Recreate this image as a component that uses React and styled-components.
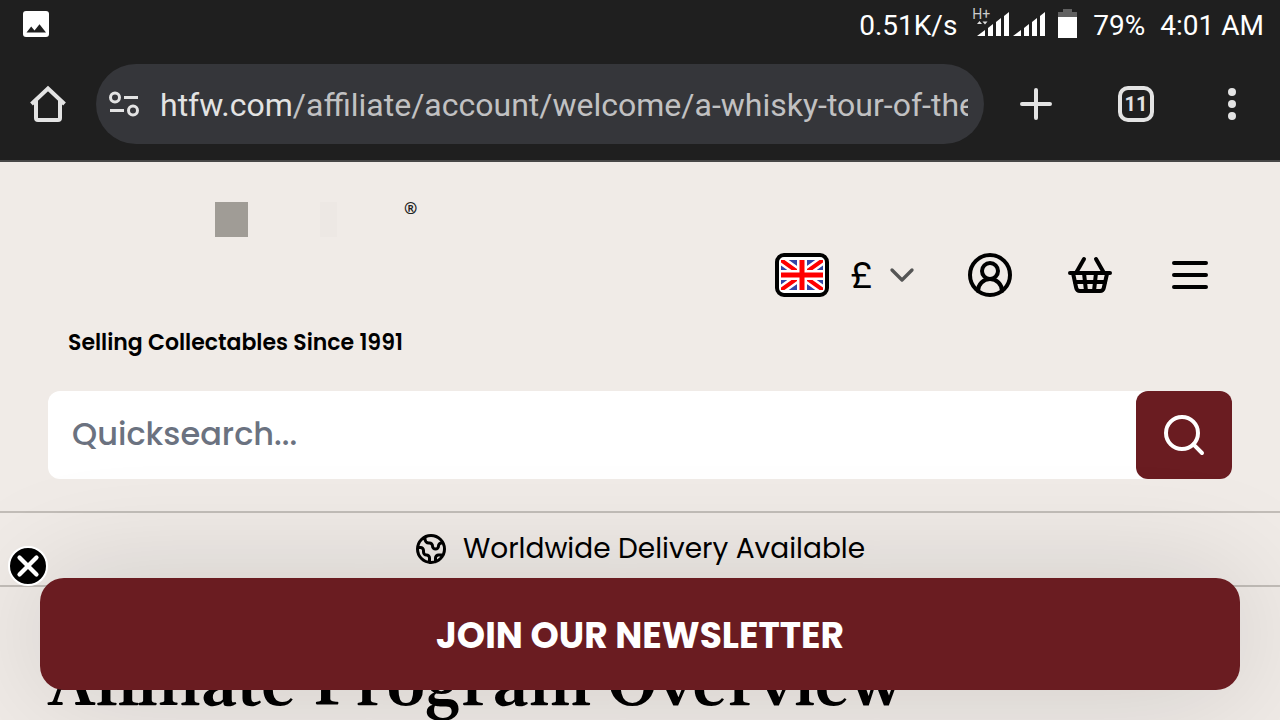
import React, { useState } from "react"
import styled, { createGlobalStyle } from "styled-components"
import { ChevronDown, CircleUserRound, ShoppingBasket, X } from "lucide-react"

const GlobalStyle = createGlobalStyle`
  *, *::before, *::after {
    box-sizing: border-box;
  }
  body {
    margin: 0;
    background: #f0ebe7;
    color: #000;
    font-family: Poppins, Inter, sans-serif;
  }
  button, input, select {
    font-family: inherit;
  }
`

const Screen = styled.div`
  display: flex;
  flex-direction: column;
  height: 100vh;
`

const Chrome = styled.header`
  flex: none;
  background: #1f1f1f;
  border-bottom: 2px solid #474747;
  font-family: Roboto, sans-serif;
`

const StatusBar = styled.div`
  display: flex;
  align-items: center;
  justify-content: space-between;
  height: 48px;
  padding: 0 16px 0 20px;
  color: #fff;
  font-size: 28px;
  line-height: 48px;
`

const StatusGroup = styled.div`
  display: flex;
  align-items: center;
  gap: 15px;
  padding-top: 4px;
`

const StatusIcons = styled.span`
  display: flex;
  align-items: center;
  gap: 12px;
  padding-bottom: 4px;
`

const Signal = styled.span`
  position: relative;
  display: flex;
`

const NetworkType = styled.span`
  position: absolute;
  top: -1px;
  left: 0;
  color: #ccc;
  font-size: 14px;
  line-height: 14px;
`

const Toolbar = styled.div`
  display: flex;
  align-items: center;
  padding: 16px 0;
`

const ToolButton = styled.button`
  display: flex;
  align-items: center;
  justify-content: center;
  flex: none;
  width: ${p => p.$wide ? "104px" : "96px"};
  height: 80px;
  padding: 0;
  border: 0;
  background: none;
  color: #e3e3e3;
  cursor: pointer;
`

const AddressBar = styled.div`
  display: flex;
  align-items: center;
  gap: 20px;
  flex: 1;
  min-width: 0;
  height: 80px;
  padding: 0 16px 0 12px;
  border-radius: 40px;
  background: #35363a;
`

const Url = styled.div`
  flex: 1;
  overflow: hidden;
  padding-top: 2px;
  color: #c1c1c2;
  font-size: 32px;
  line-height: 48px;
  white-space: nowrap;
`

const Host = styled.span`
  color: #e3e3e3;
`

const TabCount = styled.span`
  display: flex;
  align-items: center;
  justify-content: center;
  width: 36px;
  height: 36px;
  border: 4px solid #e3e3e3;
  border-radius: 10px;
  font-family: Roboto, sans-serif;
  font-size: 20px;
  font-weight: 700;
`

const Page = styled.main`
  flex: 1;
  min-height: 0;
  overflow-y: auto;
  scrollbar-width: none;
`

const ShopHeader = styled.div`
  padding: 32px 48px;
`

const HeaderRow = styled.div`
  display: flex;
  align-items: center;
  justify-content: space-between;
  margin-bottom: 35px;
`

const Brand = styled.a`
  display: flex;
  flex-direction: column;
  gap: 93px;
  padding: 8px 0 0 20px;
  color: #000;
  text-decoration: none;
`

const BrandTop = styled.span`
  display: flex;
  align-items: flex-start;
`

const Registered = styled.span`
  color: #222;
  font-family: "Open Sans", sans-serif;
  font-size: 16px;
  font-weight: 700;
  line-height: 12px;
`

const Tagline = styled.span`
  font-size: 22px;
  font-weight: 600;
  line-height: 26px;
`

const Actions = styled.nav`
  display: flex;
  align-items: center;
`

const IconButton = styled.button`
  display: flex;
  align-items: center;
  justify-content: center;
  width: 48px;
  height: 48px;
  margin-right: ${p => p.$last ? "18px" : "52px"};
  padding: 0;
  border: 0;
  background: none;
  color: #000;
  cursor: pointer;
`

const FlagButton = styled.button`
  display: flex;
  width: 54px;
  height: 44px;
  margin-right: 21px;
  padding: 2px;
  border: 4px solid #000;
  border-radius: 9px;
  background: #fff;
  cursor: pointer;
`

const Currency = styled.label`
  display: flex;
  align-items: center;
  margin-right: 44px;
  color: #555;
`

const CurrencySelect = styled.select`
  width: 64px;
  margin-right: -32px;
  padding: 0;
  border: 0;
  background: none;
  appearance: none;
  color: #000;
  font-size: 38px;
  font-weight: 400;
  line-height: 48px;
`

const SearchForm = styled.form`
  display: flex;
  height: 88px;
  border-radius: 12px;
  background: #fff;
`

const SearchInput = styled.input`
  flex: 1;
  min-width: 0;
  padding: 0 24px 2px;
  border: 0;
  background: none;
  color: #000;
  font-size: 32px;
  font-weight: 500;
  &::placeholder {
    color: #6b7280;
    opacity: 1;
  }
  &:focus {
    outline: none;
  }
`

const SearchButton = styled.button`
  display: flex;
  align-items: center;
  justify-content: center;
  width: 96px;
  padding: 0;
  border: 0;
  border-radius: 12px;
  background: #6a1c21;
  color: #fff;
  cursor: pointer;
`

const Delivery = styled.div`
  display: flex;
  align-items: center;
  justify-content: center;
  gap: 14px;
  height: 76px;
  padding-right: 2px;
  border-top: 2px solid #c2bdb8;
  border-bottom: 2px solid #c2bdb8;
  font-size: 28px;
`

const Title = styled.h1`
  margin: 0;
  padding: 56px 48px 0;
  font-family: Gelasio, "Liberation Serif", serif;
  font-size: 64px;
  font-weight: 600;
  line-height: 88px;
  white-space: nowrap;
`

const Newsletter = styled.aside`
  position: fixed;
  right: 40px;
  bottom: 30px;
  left: 40px;
  border-radius: 24px;
  box-shadow: 0 0 120px rgba(0, 0, 0, 0.15);
`

const JoinButton = styled.button`
  width: 100%;
  height: 112px;
  padding: 2px 24px 0;
  border: 0;
  border-radius: 24px;
  background: #6a1c21;
  color: #fff;
  font-size: 36px;
  font-weight: 700;
  cursor: pointer;
`

const CloseButton = styled.button`
  position: absolute;
  top: -32px;
  left: -32px;
  display: flex;
  align-items: center;
  justify-content: center;
  width: 40px;
  height: 40px;
  padding: 0;
  border: 2px solid #fff;
  border-radius: 50%;
  background: #000;
  color: #fff;
  cursor: pointer;
`

const PictureIcon = () => (
  <svg width="32" height="32" viewBox="0 0 32 32">
    <rect x="3" y="3" width="26" height="26" rx="3" fill="#fff" />
    <path d="M6.500 24.500 11.200 18.500 14.500 22.500 19.500 16.200 26 24.500z" fill="#1f1f1f" />
  </svg>
)

const SignalIcon = () => (
  <svg width="74" height="32" viewBox="0 0 74 32" fill="#fff">
    {[5, 41].map(x => (
      <path
        key={x}
        transform={`translate(${x} 0)`}
        d="M0 28 8 22V28zM11 20 16 16V28H11zM19 14 24 10V28H19zM27 8 32 4V28H27z"
      />
    ))}
    <path d="M5 16h5L7.500 13zM10.500 13.500h5L13 16.500z" fill="#ddd" />
  </svg>
)

const BatteryIcon = () => (
  <svg width="20" height="32" viewBox="0 0 20 32">
    <path d="M5 1h9v3h5v6H0V4h5z" fill="#616161" />
    <path d="M0 9h19v21H0z" fill="#fff" />
  </svg>
)

const HomeIcon = () => (
  <svg width="40" height="40" viewBox="0 0 40 40" fill="none" stroke="currentColor" strokeWidth="4">
    <path d="M3.500 20 20 4.500 36.500 20" />
    <path d="M8 16V34a2 2 0 0 0 2 2H30a2 2 0 0 0 2-2V16" />
  </svg>
)

const SiteIcon = () => (
  <svg width="32" height="32" viewBox="0 0 32 32" fill="none" stroke="#e3e3e3" strokeWidth="3">
    <circle cx="7" cy="9.500" r="4.500" />
    <path d="M16 9.500H30M2 22.500H16" />
    <circle cx="25" cy="22.500" r="4.500" />
  </svg>
)

const PlusIcon = () => (
  <svg width="32" height="32" viewBox="0 0 32 32" stroke="currentColor" strokeWidth="4" strokeLinecap="round">
    <path d="M16 2V30M2 16H30" />
  </svg>
)

const DotsIcon = () => (
  <svg width="8" height="32" viewBox="0 0 8 32" fill="currentColor">
    <circle cx="4" cy="4" r="4" />
    <circle cx="4" cy="16" r="4" />
    <circle cx="4" cy="28" r="4" />
  </svg>
)

const LogoBlocks = () => (
  <svg width="336" height="35" viewBox="0 0 336 35">
    <rect x="147" width="33" height="35" fill="#a09c96" />
    <rect x="252" width="17" height="35" fill="#ede8e4" />
  </svg>
)

const UnionJack = () => (
  <svg width="42" height="32" viewBox="0 0 42 32">
    <rect width="42" height="32" fill="#fff" />
    <rect y="1" width="42" height="30" fill="#3346a6" />
    <path d="M0 1 42 31M42 1 0 31" stroke="#fff" strokeWidth="9" />
    <path d="M0 1 42 31M42 1 0 31" stroke="#f00" strokeWidth="4" />
    <path d="M21 1V31M0 16H42" stroke="#fff" strokeWidth="10" />
    <path d="M21 1V31M0 16H42" stroke="#f00" strokeWidth="5" />
    <path d="M0 0H42V1H0zM0 31H42V32H0z" fill="#fff" />
  </svg>
)

const MenuIcon = () => (
  <svg width="48" height="48" viewBox="0 0 24 24" stroke="currentColor" strokeWidth="2" strokeLinecap="round">
    <path d="M4 6H20M4 12H20M4 18H20" />
  </svg>
)

const SearchIcon = () => (
  <svg width="48" height="48" viewBox="0 0 24 24" fill="none" stroke="currentColor" strokeWidth="2" strokeLinecap="round">
    <circle cx="11" cy="11" r="8" />
    <path d="m21 21-4.300-4.300" />
  </svg>
)

const GlobeIcon = () => (
  <svg width="36" height="36" viewBox="0 0 24 24" fill="none" stroke="currentColor" strokeWidth="2" strokeLinecap="round" strokeLinejoin="round">
    <path d="M3.055 11H5a2 2 0 0 1 2 2v1a2 2 0 0 0 2 2 2 2 0 0 1 2 2v2.945M8 3.935V5.500A2.500 2.500 0 0 0 10.500 8h.5a2 2 0 0 1 2 2 2 2 0 1 0 4 0 2 2 0 0 1 2-2h1.064M15 20.488V18a2 2 0 0 1 2-2h3.064M21 12a9 9 0 1 1-18 0 9 9 0 0 1 18 0z" />
  </svg>
)

const BrowserBar = () => (
  <Chrome>
    <StatusBar>
      <PictureIcon />
      <StatusGroup>
        <span>0.51K/s</span>
        <StatusIcons>
          <Signal>
            <SignalIcon />
            <NetworkType>H+</NetworkType>
          </Signal>
          <BatteryIcon />
        </StatusIcons>
        <span>79%</span>
        <span>4:01 AM</span>
      </StatusGroup>
    </StatusBar>
    <Toolbar>
      <ToolButton aria-label="Home"><HomeIcon /></ToolButton>
      <AddressBar>
        <SiteIcon />
        <Url><Host>htfw.com</Host>/affiliate/account/welcome/a-whisky-tour-of-the</Url>
      </AddressBar>
      <ToolButton $wide aria-label="New tab"><PlusIcon /></ToolButton>
      <ToolButton aria-label="Tabs"><TabCount>11</TabCount></ToolButton>
      <ToolButton aria-label="More"><DotsIcon /></ToolButton>
    </Toolbar>
  </Chrome>
)

const App = () => {
  const [query, setQuery] = useState("")
  const [showNewsletter, setShowNewsletter] = useState(true)

  return (
    <Screen>
      <GlobalStyle />
      <BrowserBar />
      <Page>
        <ShopHeader>
          <HeaderRow>
            <Brand href="/">
              <BrandTop>
                <LogoBlocks />
                <Registered>®</Registered>
              </BrandTop>
              <Tagline>Selling Collectables Since 1991</Tagline>
            </Brand>
            <Actions>
              <FlagButton aria-label="Country"><UnionJack /></FlagButton>
              <Currency>
                <CurrencySelect aria-label="Currency" defaultValue="GBP">
                  <option value="GBP">£</option>
                </CurrencySelect>
                <ChevronDown size={40} pointerEvents="none" />
              </Currency>
              <IconButton aria-label="Account"><CircleUserRound size={48} /></IconButton>
              <IconButton aria-label="Basket"><ShoppingBasket size={48} /></IconButton>
              <IconButton $last aria-label="Menu"><MenuIcon /></IconButton>
            </Actions>
          </HeaderRow>
          <SearchForm onSubmit={e => e.preventDefault()}>
            <SearchInput
              aria-label="Quicksearch"
              placeholder="Quicksearch..."
              value={query}
              onChange={e => setQuery(e.target.value)}
            />
            <SearchButton aria-label="Search"><SearchIcon /></SearchButton>
          </SearchForm>
        </ShopHeader>
        <Delivery>
          <GlobeIcon />
          <span>Worldwide Delivery Available</span>
        </Delivery>
        <Title>Affiliate Program Overview</Title>
      </Page>
      {showNewsletter && (
        <Newsletter>
          <JoinButton>JOIN OUR NEWSLETTER</JoinButton>
          <CloseButton aria-label="Close" onClick={() => setShowNewsletter(false)}>
            <X size={34} strokeWidth={3} />
          </CloseButton>
        </Newsletter>
      )}
    </Screen>
  )
}

export default App
